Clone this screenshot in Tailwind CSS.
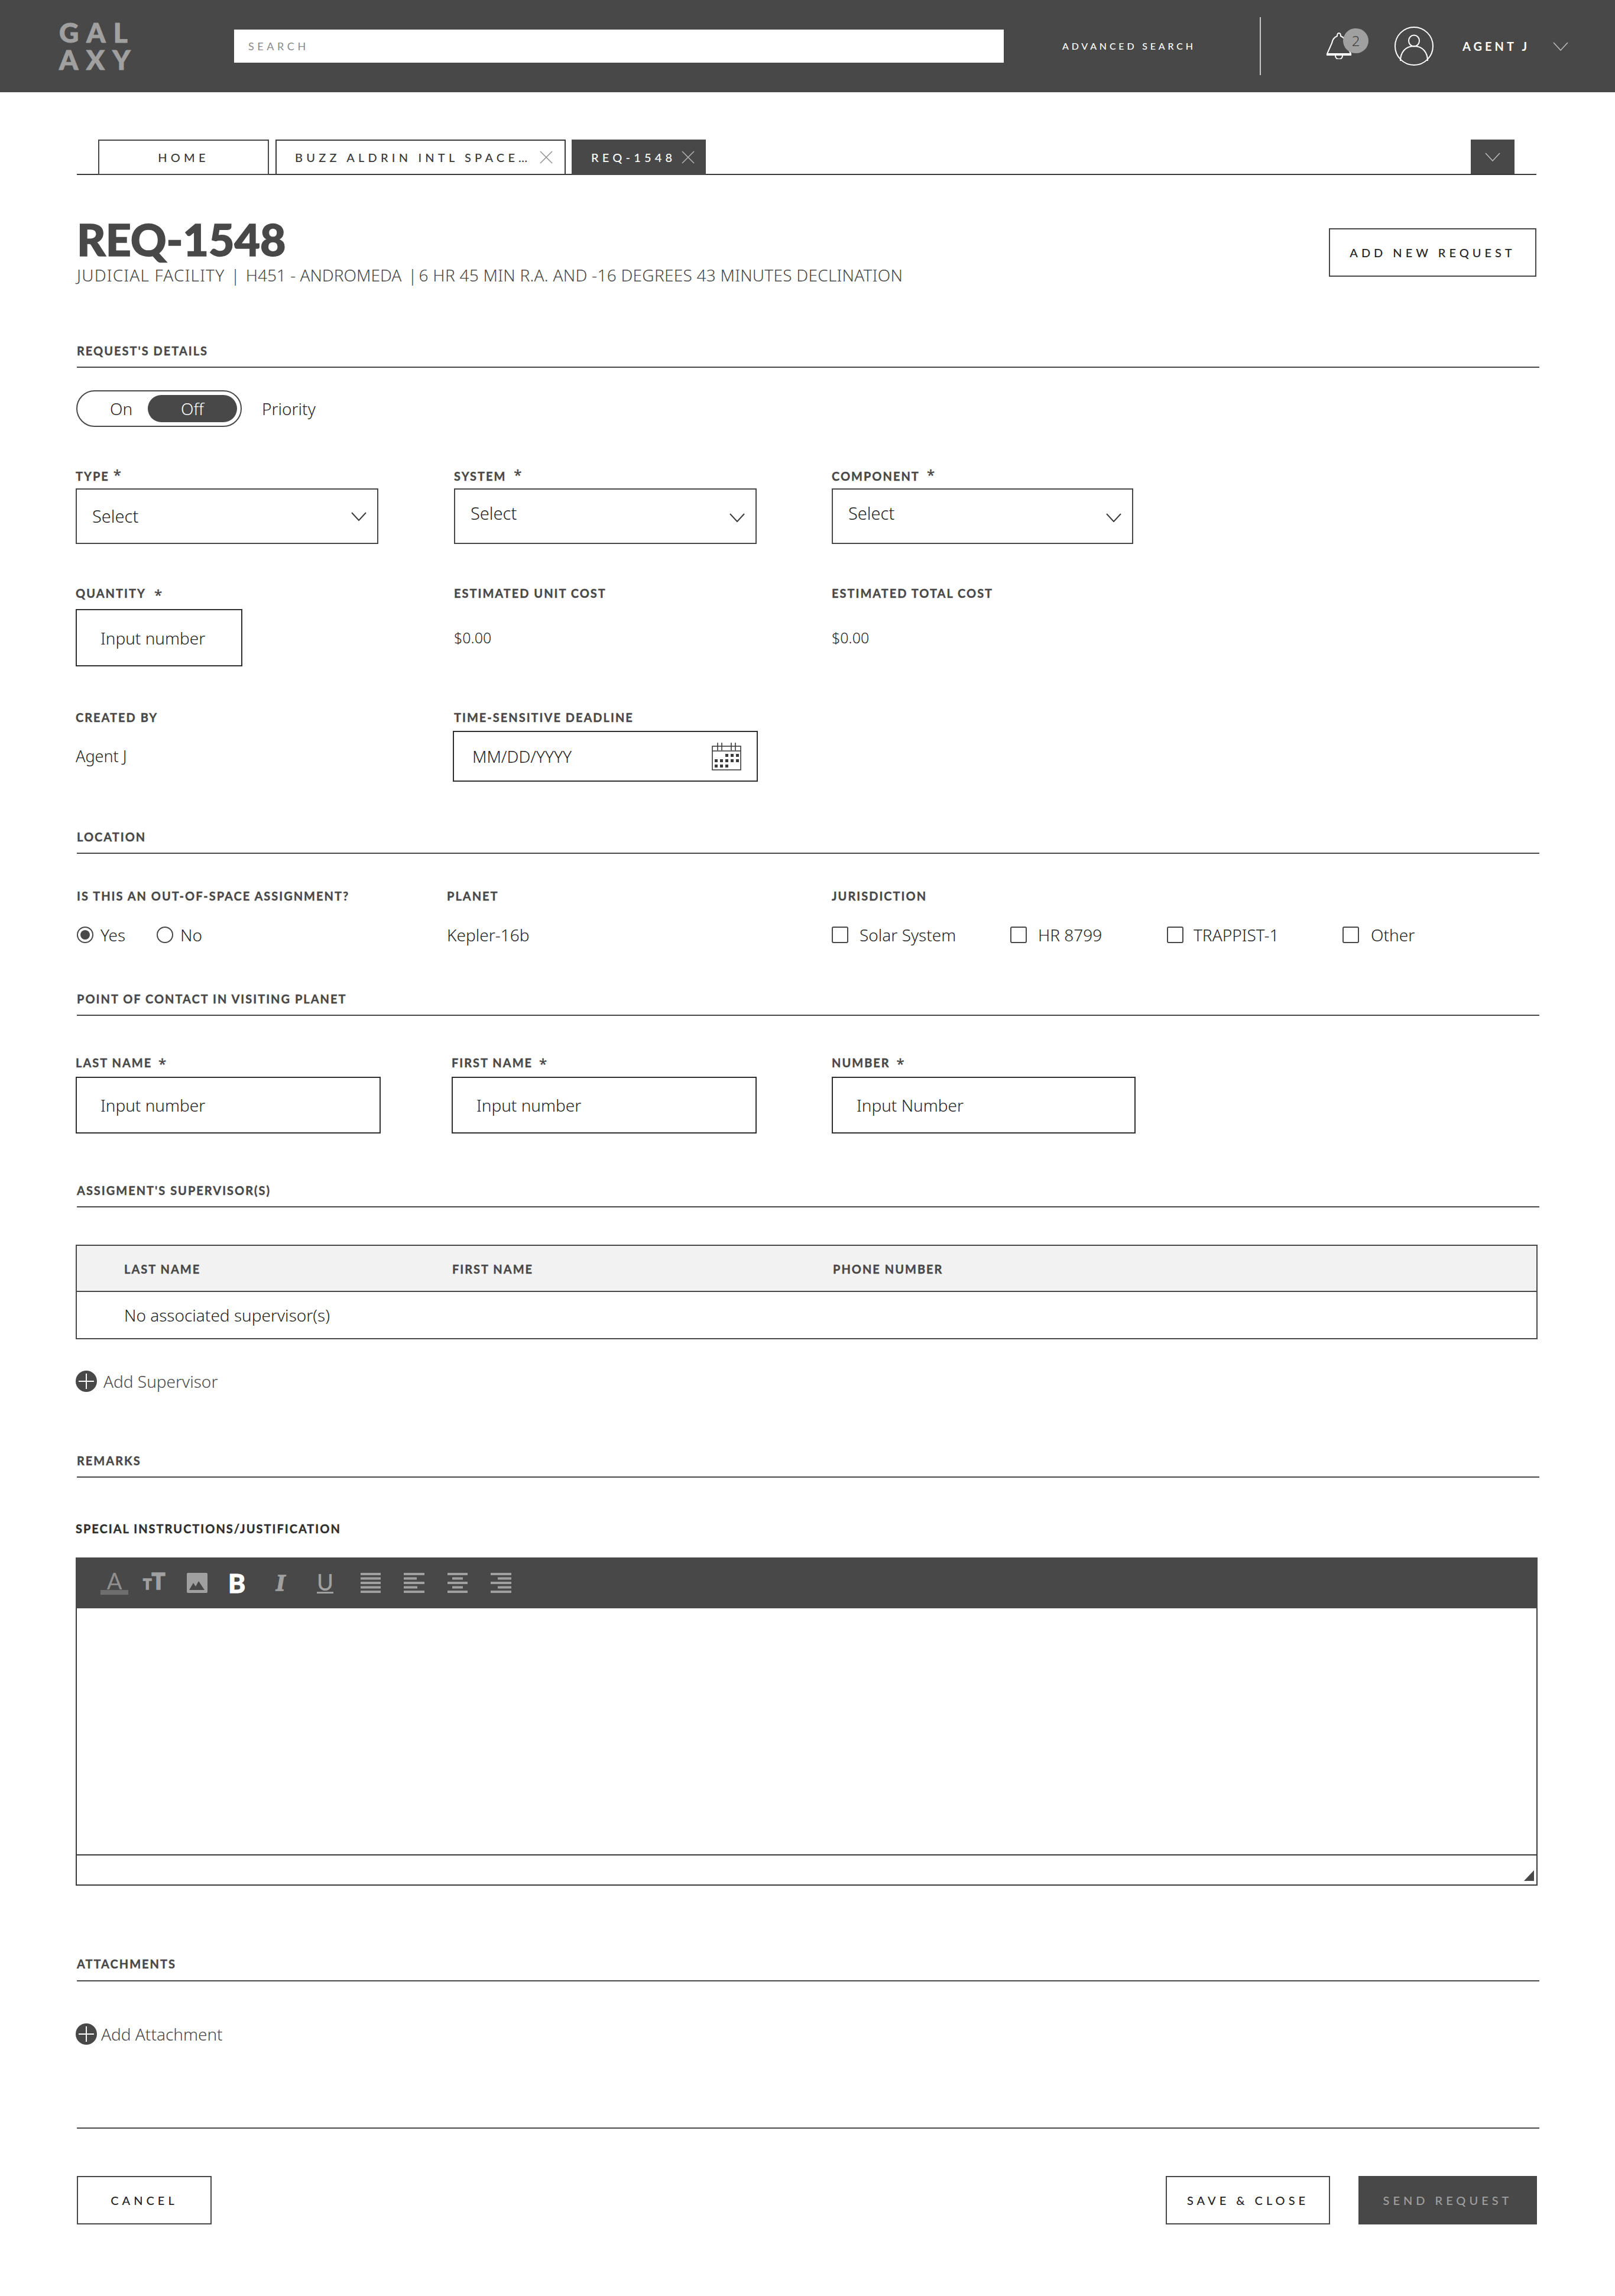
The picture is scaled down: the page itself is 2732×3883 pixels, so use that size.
<!DOCTYPE html>
<html lang="en">
<head>
    <meta charset="UTF-8">
    <meta name="viewport" content="width=device-width, initial-scale=1.0">
    <title>REQ-1548</title>
    <script src="https://cdn.jsdelivr.net/npm/@tailwindcss/browser@4"></script>
</head>
<body class="bg-white font-['Noto_Sans',sans-serif] text-[#242424] min-h-[3883px]">
    <!-- top bar -->
    <header class="h-[156px] bg-[#484848] flex items-center">
        <div class="w-[396px] pl-[100px] font-['Lato',sans-serif] font-black text-[46px] leading-[46px] tracking-[0.29em] text-[#a0a0a0] [-webkit-text-stroke:1px]">
            <div>GAL</div>
            <div>AXY</div>
        </div>
        <div class="w-[1302px] h-[56px] bg-white flex items-center pl-[24px] font-['Lato',sans-serif] text-[18px] tracking-[0.31em] text-[#8a8a8a]">SEARCH</div>
        <div class="ml-[99px] w-[334px] font-['Lato',sans-serif] font-medium text-[16px] tracking-[0.3em] text-white">ADVANCED SEARCH</div>
        <div class="w-[2px] h-[98px] bg-[#c8c8c8]"></div>
        <div class="ml-[110px] relative w-[72px] h-[60px] shrink-0">
            <svg class="absolute left-0 top-[7px]" width="44" height="45" viewBox="0 0 44 45" fill="none" stroke="#fff" stroke-width="2">
                <path d="M22 1c-2 0-3 2-3 5-5 2-8 6-9 12L2 36h40l-8-18c-1-6-4-10-9-12 0-3-1-5-3-5z"/>
                <path d="M1 38h42"/>
                <path d="M16 39c0 8 12 8 12 0"/>
            </svg>
            <div class="absolute left-[29px] top-0 w-[43px] h-[42px] rounded-full bg-[#a0a0a0] flex items-center justify-center text-[24px] text-[#3a3a3a] font-light">2</div>
        </div>
        <svg class="ml-[44px] shrink-0" width="66" height="66" viewBox="0 0 66 66" fill="none" stroke="#fff" stroke-width="2">
            <circle cx="33" cy="33" r="32"/>
            <ellipse cx="33" cy="24" rx="9" ry="9.5"/>
            <path d="M10 58c0-14 8-25 23-25s23 11 23 25"/>
        </svg>
        <div class="ml-[49px] w-[153px] font-['Lato',sans-serif] font-bold text-[20px] tracking-[0.25em] text-white">AGENT J</div>
        <svg width="26" height="15" viewBox="0 0 26 15" fill="none" stroke="#bdbdbd" stroke-width="1.5"><path d="M1 1l12 13L25 1"/></svg>
    </header>

    <main class="pl-[128px] pr-[128px]">
        <!-- tabs -->
        <nav class="mt-[80px] ml-[2px] mr-[5px] h-[60px] border-b-2 border-[#3a3a3a] flex pl-[36px] font-['Lato',sans-serif] font-medium text-[20px] tracking-[0.31em]">
            <div class="w-[289px] h-[60px] border-2 border-[#484848] flex items-center justify-center text-[#3a3a3a]">HOME</div>
            <div class="ml-[11px] w-[491px] h-[60px] border-2 border-[#3a3a3a] flex items-center pl-[31px] text-[#3a3a3a]">
                <span class="w-[414px] whitespace-nowrap">BUZZ ALDRIN INTL SPACE…</span>
                <svg width="22" height="22" viewBox="0 0 22 22" fill="none" stroke="#8f8f8f" stroke-width="1.5"><path d="M1 1l20 20M21 1L1 21"/></svg>
            </div>
            <div class="ml-[10px] w-[227px] h-[60px] bg-[#484848] flex items-center pl-[33px] text-white">
                <span class="w-[153px] whitespace-nowrap">REQ-1548</span>
                <svg width="22" height="22" viewBox="0 0 22 22" fill="none" stroke="#b5b5b5" stroke-width="1.5"><path d="M1 1l20 20M21 1L1 21"/></svg>
            </div>
            <div class="ml-auto mr-[37px] w-[74px] h-[58px] bg-[#484848] flex items-center justify-center">
                <svg width="26" height="15" viewBox="0 0 26 15" fill="none" stroke="#bdbdbd" stroke-width="1.5"><path d="M1 1l12 13L25 1"/></svg>
            </div>
        </nav>

        <!-- title -->
        <section class="pt-[64px] ml-[2px] mr-[5px] flex justify-between items-start">
            <div>
                <h1 class="font-['Lato',sans-serif] font-black text-[75px] leading-[88px] text-[#484848] [-webkit-text-stroke:1.5px]">REQ-1548</h1>
                <p class="text-[28px] leading-[34px] text-[#484848] font-light whitespace-nowrap"><span class="tracking-[1.2px]">JUDICIAL FACILITY</span><span class="mx-[10px]">|</span><span>H451 - ANDROMEDA</span><span class="ml-[11px] mr-[3px]">|</span><span class="tracking-[0.26px]">6 HR 45 MIN R.A. AND -16 DEGREES 43 MINUTES DECLINATION</span></p>
            </div>
            <button class="mt-[26px] w-[351px] h-[82px] border-2 border-[#484848] font-['Lato',sans-serif] font-medium text-[20px] tracking-[0.3em]">ADD NEW REQUEST</button>
        </section>

        <!-- request's details -->
        <h2 class="mt-[101px] ml-[2px] pb-[17px] border-b-2 border-[#484848] font-['Lato',sans-serif] font-bold text-[20px] leading-[20px] tracking-[0.1em] text-[#484848] [-webkit-text-stroke:0.4px]">REQUEST'S DETAILS</h2>

        <div class="mt-[38px] flex items-center">
            <div class="ml-[1px] w-[280px] h-[62px] rounded-full border-2 border-[#484848] flex items-center pl-[7px] pr-[5px] text-[28px] font-light">
                <span class="w-[112px] pl-[22px] text-center">On</span>
                <span class="w-[151px] h-[46px] rounded-full bg-[#484848] text-white flex items-center justify-center">Off</span>
            </div>
            <span class="ml-[34px] text-[28px] font-light">Priority</span>
        </div>

        <div class="mt-[73px] grid grid-cols-[640px_639px_1fr] text-[29px] font-light">
            <div>
                <label class="block h-[20px] mb-[11px] font-['Lato',sans-serif] font-bold text-[20px] leading-[20px] tracking-[0.1em] text-[#484848] [-webkit-text-stroke:0.4px]">TYPE <span class="font-['Noto_Sans',sans-serif] text-[24px] font-normal leading-[0] align-[1px]">*</span></label>
                <div class="w-[512px] h-[94px] border-2 border-[#484848] flex items-center justify-between pl-[26px] pr-[18px]">
                    <span>Select</span>
                    <svg width="26" height="15" viewBox="0 0 26 15" fill="none" stroke="#3a3a3a" stroke-width="2"><path d="M1 1l12 13L25 1"/></svg>
                </div>
            </div>
            <div>
                <label class="block h-[20px] mb-[11px] font-['Lato',sans-serif] font-bold text-[20px] leading-[20px] tracking-[0.1em] text-[#484848] [-webkit-text-stroke:0.4px]">SYSTEM <span class="ml-[6px] font-['Noto_Sans',sans-serif] text-[24px] font-normal leading-[0] align-[1px]">*</span></label>
                <div class="w-[512px] h-[94px] border-2 border-[#484848] flex justify-between pl-[26px] pr-[18px] pt-[18px]">
                    <span>Select</span>
                    <svg class="mt-[22px]" width="26" height="15" viewBox="0 0 26 15" fill="none" stroke="#3a3a3a" stroke-width="2"><path d="M1 1l12 13L25 1"/></svg>
                </div>
            </div>
            <div>
                <label class="block h-[20px] mb-[11px] font-['Lato',sans-serif] font-bold text-[20px] leading-[20px] tracking-[0.1em] text-[#484848] [-webkit-text-stroke:0.4px]">COMPONENT <span class="ml-[6px] font-['Noto_Sans',sans-serif] text-[24px] font-normal leading-[0] align-[1px]">*</span></label>
                <div class="w-[510px] h-[94px] border-2 border-[#484848] flex justify-between pl-[26px] pr-[18px] pt-[18px]">
                    <span>Select</span>
                    <svg class="mt-[22px]" width="26" height="15" viewBox="0 0 26 15" fill="none" stroke="#3a3a3a" stroke-width="2"><path d="M1 1l12 13L25 1"/></svg>
                </div>
            </div>
        </div>

        <div class="mt-[73px] grid grid-cols-[640px_639px_1fr]">
            <div>
                <label class="block h-[20px] mb-[17px] font-['Lato',sans-serif] font-bold text-[20px] leading-[20px] tracking-[0.1em] text-[#484848] [-webkit-text-stroke:0.4px]">QUANTITY <span class="ml-[8px] font-['Noto_Sans',sans-serif] text-[24px] font-normal leading-[0] align-[-4px]">*</span></label>
                <div class="w-[282px] h-[97px] border-2 border-[#2e2e2e] flex items-center pl-[40px] text-[28px] font-light">Input number</div>
            </div>
            <div>
                <label class="block h-[20px] mb-[17px] font-['Lato',sans-serif] font-bold text-[20px] leading-[20px] tracking-[0.1em] text-[#484848] [-webkit-text-stroke:0.4px]">ESTIMATED UNIT COST</label>
                <div class="h-[97px] flex items-center text-[25px] font-light">$0.00</div>
            </div>
            <div>
                <label class="block h-[20px] mb-[17px] font-['Lato',sans-serif] font-bold text-[20px] leading-[20px] tracking-[0.1em] text-[#484848] [-webkit-text-stroke:0.4px]">ESTIMATED TOTAL COST</label>
                <div class="h-[97px] flex items-center text-[25px] font-light">$0.00</div>
            </div>
        </div>

        <div class="mt-[76px] grid grid-cols-[640px_639px_1fr]">
            <div>
                <label class="block h-[20px] mb-[13px] font-['Lato',sans-serif] font-bold text-[20px] leading-[20px] tracking-[0.1em] text-[#484848] [-webkit-text-stroke:0.4px]">CREATED BY</label>
                <div class="h-[86px] flex items-center text-[27px] font-light">Agent J</div>
            </div>
            <div>
                <label class="block h-[20px] mb-[13px] font-['Lato',sans-serif] font-bold text-[20px] leading-[20px] tracking-[0.1em] text-[#484848] [-webkit-text-stroke:0.4px]">TIME-SENSITIVE DEADLINE</label>
                <div class="-ml-[2px] w-[516px] h-[86px] border-2 border-[#2e2e2e] flex items-center justify-between pl-[31px] pr-[26px] text-[28px] font-light">
                    <span>MM/DD/YYYY</span>
                    <svg width="50" height="48" viewBox="0 0 50 48" fill="none" stroke="#3a3a3a" stroke-width="1.6">
                        <rect x="1" y="7" width="48" height="40"/>
                        <path d="M1 15h48M10 1v13M17 1v13M33 1v13M40 1v13"/>
                        <g fill="#3a3a3a" stroke="none">
                            <rect x="23" y="20" width="5" height="5"/><rect x="32" y="20" width="5" height="5"/><rect x="41" y="20" width="5" height="5"/>
                            <rect x="5" y="29" width="5" height="5"/><rect x="14" y="29" width="5" height="5"/><rect x="23" y="29" width="5" height="5"/><rect x="32" y="29" width="5" height="5"/><rect x="41" y="29" width="5" height="5"/>
                            <rect x="5" y="38" width="5" height="5"/><rect x="14" y="38" width="5" height="5"/><rect x="23" y="38" width="5" height="5"/>
                        </g>
                    </svg>
                </div>
            </div>
        </div>

        <!-- location -->
        <h2 class="mt-[83px] ml-[2px] pb-[17px] border-b-2 border-[#484848] font-['Lato',sans-serif] font-bold text-[20px] leading-[20px] tracking-[0.1em] text-[#484848] [-webkit-text-stroke:0.4px]">LOCATION</h2>

        <div class="mt-[61px] ml-[2px] grid grid-cols-[626px_651px_1fr] font-['Lato',sans-serif] font-bold text-[20px] leading-[20px] tracking-[0.1em] text-[#484848] [-webkit-text-stroke:0.4px]">
            <div>IS THIS AN OUT-OF-SPACE ASSIGNMENT?</div>
            <div>PLANET</div>
            <div>JURISDICTION</div>
        </div>
        <div class="mt-[42px] ml-[2px] grid grid-cols-[626px_651px_1fr] text-[28px] leading-[26px] font-light h-[28px] items-center">
            <div class="flex items-center">
                <span class="w-[28px] h-[28px] rounded-full border-2 border-[#484848] flex items-center justify-center"><span class="w-[16px] h-[16px] rounded-full bg-[#484848]"></span></span>
                <span class="ml-[12px] w-[95px]">Yes</span>
                <span class="w-[28px] h-[28px] rounded-full border-2 border-[#484848]"></span>
                <span class="ml-[12px]">No</span>
            </div>
            <div>Kepler-16b</div>
            <div class="flex items-center">
                <span class="w-[28px] h-[28px] rounded-[3px] border-2 border-[#484848]"></span>
                <span class="ml-[19px] w-[255px]">Solar System</span>
                <span class="w-[28px] h-[28px] rounded-[3px] border-2 border-[#484848]"></span>
                <span class="ml-[19px] w-[218px]">HR 8799</span>
                <span class="w-[28px] h-[28px] rounded-[3px] border-2 border-[#484848]"></span>
                <span class="ml-[17px] w-[252px]">TRAPPIST-1</span>
                <span class="w-[28px] h-[28px] rounded-[3px] border-2 border-[#484848]"></span>
                <span class="ml-[20px]">Other</span>
            </div>
        </div>

        <!-- point of contact -->
        <h2 class="mt-[84px] ml-[2px] pb-[17px] border-b-2 border-[#484848] font-['Lato',sans-serif] font-bold text-[20px] leading-[20px] tracking-[0.1em] text-[#484848] [-webkit-text-stroke:0.4px]">POINT OF CONTACT IN VISITING PLANET</h2>

        <div class="mt-[69px] grid grid-cols-[636px_643px_1fr]">
            <div>
                <label class="block h-[20px] mb-[14px] font-['Lato',sans-serif] font-bold text-[20px] leading-[20px] tracking-[0.1em] text-[#484848] [-webkit-text-stroke:0.4px]">LAST NAME <span class="ml-[4px] font-['Noto_Sans',sans-serif] text-[24px] font-normal leading-[0] align-[-3px]">*</span></label>
                <div class="w-[516px] h-[96px] border-2 border-[#2e2e2e] flex items-center pl-[40px] text-[28px] font-light">Input number</div>
            </div>
            <div>
                <label class="block h-[20px] mb-[14px] font-['Lato',sans-serif] font-bold text-[20px] leading-[20px] tracking-[0.1em] text-[#484848] [-webkit-text-stroke:0.4px]">FIRST NAME <span class="ml-[4px] font-['Noto_Sans',sans-serif] text-[24px] font-normal leading-[0] align-[-3px]">*</span></label>
                <div class="w-[516px] h-[96px] border-2 border-[#2e2e2e] flex items-center pl-[40px] text-[28px] font-light">Input number</div>
            </div>
            <div>
                <label class="block h-[20px] mb-[14px] font-['Lato',sans-serif] font-bold text-[20px] leading-[20px] tracking-[0.1em] text-[#484848] [-webkit-text-stroke:0.4px]">NUMBER <span class="ml-[4px] font-['Noto_Sans',sans-serif] text-[24px] font-normal leading-[0] align-[-3px]">*</span></label>
                <div class="w-[514px] h-[96px] border-2 border-[#2e2e2e] flex items-center pl-[40px] text-[28px] font-light">Input Number</div>
            </div>
        </div>

        <!-- supervisors -->
        <h2 class="mt-[86px] ml-[2px] pb-[17px] border-b-2 border-[#484848] font-['Lato',sans-serif] font-bold text-[20px] leading-[20px] tracking-[0.1em] text-[#484848] [-webkit-text-stroke:0.4px]">ASSIGMENT'S SUPERVISOR(S)</h2>

        <div class="mt-[63px] w-[2473px] border-2 border-[#484848]">
            <div class="h-[78px] pt-[2px] bg-[#f2f2f2] border-b-2 border-[#484848] grid grid-cols-[555px_644px_1fr] items-center pl-[80px] font-['Lato',sans-serif] font-bold text-[20px] tracking-[0.1em] text-[#484848] [-webkit-text-stroke:0.4px]">
                <div>LAST NAME</div>
                <div>FIRST NAME</div>
                <div>PHONE NUMBER</div>
            </div>
            <div class="h-[78px] flex items-center pl-[80px] text-[28px] font-light">No associated supervisor(s)</div>
        </div>

        <div class="mt-[53px] h-[36px] flex items-center text-[28px] font-light text-[#484848]">
            <svg width="36" height="36" viewBox="0 0 36 36"><circle cx="18" cy="18" r="18" fill="#484848"/><path d="M18 5v26M5 18h26" stroke="#fff" stroke-width="2"/></svg>
            <span class="ml-[11px]">Add Supervisor</span>
        </div>

        <!-- remarks -->
        <h2 class="mt-[106px] ml-[2px] pb-[17px] border-b-2 border-[#484848] font-['Lato',sans-serif] font-bold text-[20px] leading-[20px] tracking-[0.1em] text-[#484848] [-webkit-text-stroke:0.4px]">REMARKS</h2>

        <div class="mt-[76px] h-[20px] font-['Lato',sans-serif] font-bold text-[20px] leading-[20px] tracking-[0.1em] text-[#2e2e2e] [-webkit-text-stroke:0.4px]">SPECIAL INSTRUCTIONS/JUSTIFICATION</div>

        <!-- editor -->
        <div class="mt-[39px] w-[2473px]">
            <div class="h-[86px] bg-[#484848] flex items-center pl-[42px] text-[#a0a0a0]">
                <div class="w-[47px] flex flex-col items-center text-[#8f8f8f]">
                    <span class="font-['Lato',sans-serif] text-[38px] leading-[32px]">A</span>
                    <span class="w-[47px] h-[8px] bg-[#6e6e6e]"></span>
                </div>
                <div class="ml-[25px] w-[38px] font-['Lato',sans-serif] font-black leading-[34px] whitespace-nowrap [-webkit-text-stroke:1.5px]"><span class="text-[24px]">T</span><span class="text-[38px]">T</span></div>
                <svg class="ml-[36px]" width="35" height="34" viewBox="0 0 35 34"><rect width="35" height="34" rx="2" fill="#a0a0a0"/><path d="M4 29l7-12 4 6 5-9 10 15z" fill="#484848"/></svg>
                <span class="ml-[35px] w-[29px] font-['Lato',sans-serif] font-black text-[44px] leading-[44px] text-white [-webkit-text-stroke:1px]">B</span>
                <span class="ml-[48px] w-[23px] font-['Liberation_Serif',serif] font-bold italic text-[40px] leading-[40px] text-center [-webkit-text-stroke:1.5px]">I</span>
                <span class="ml-[50px] w-[28px] flex flex-col items-center">
                    <span class="font-['Lato',sans-serif] font-medium text-[38px] leading-[30px]">U</span>
                    <span class="mt-[2px] w-[28px] h-[3px] bg-[#a0a0a0]"></span>
                </span>
                <svg class="ml-[46px]" width="34" height="34" viewBox="0 0 34 34" fill="#a0a0a0"><rect y="0" width="34" height="4"/><rect y="7.5" width="34" height="4"/><rect y="15" width="34" height="4"/><rect y="22.5" width="34" height="4"/><rect y="30" width="34" height="4"/></svg>
                <svg class="ml-[39px]" width="35" height="34" viewBox="0 0 35 34" fill="#a0a0a0"><rect y="0" width="35" height="4"/><rect y="7.5" width="22" height="4"/><rect y="15" width="35" height="4"/><rect y="22.5" width="23" height="4"/><rect y="30" width="35" height="4"/></svg>
                <svg class="ml-[39px]" width="34" height="34" viewBox="0 0 34 34" fill="#a0a0a0"><rect y="0" width="34" height="4"/><rect x="8" y="7.5" width="18" height="4"/><rect y="15" width="34" height="4"/><rect x="8" y="22.5" width="18" height="4"/><rect y="30" width="34" height="4"/></svg>
                <svg class="ml-[39px]" width="35" height="34" viewBox="0 0 35 34" fill="#a0a0a0"><rect y="0" width="35" height="4"/><rect x="12" y="7.5" width="23" height="4"/><rect y="15" width="35" height="4"/><rect x="12" y="22.5" width="23" height="4"/><rect y="30" width="35" height="4"/></svg>
            </div>
            <div class="h-[416px] border-x-2 border-[#3a3a3a]"></div>
            <div class="relative h-[53px] border-2 border-[#3a3a3a]">
                <svg class="absolute right-[4px] bottom-[6px]" width="17" height="18" viewBox="0 0 17 18"><path d="M17 0v18H0z" fill="#484848"/></svg>
            </div>
        </div>

        <!-- attachments -->
        <h2 class="mt-[122px] ml-[2px] pb-[18px] border-b-2 border-[#484848] font-['Lato',sans-serif] font-bold text-[20px] leading-[20px] tracking-[0.1em] text-[#484848] [-webkit-text-stroke:0.4px]">ATTACHMENTS</h2>

        <div class="mt-[71px] h-[36px] flex items-center text-[28px] font-light text-[#484848]">
            <svg width="36" height="36" viewBox="0 0 36 36"><circle cx="18" cy="18" r="18" fill="#484848"/><path d="M18 5v26M5 18h26" stroke="#fff" stroke-width="2"/></svg>
            <span class="ml-[7px]">Add Attachment</span>
        </div>

        <hr class="mt-[140px] ml-[2px] border-t-2 border-[#484848]">

        <!-- actions -->
        <div class="mt-[80px] ml-[2px] mr-[4px] flex items-center font-['Lato',sans-serif] font-medium text-[20px] tracking-[0.3em]">
            <button class="w-[228px] h-[82px] border-2 border-[#484848]">CANCEL</button>
            <button class="ml-auto w-[278px] h-[82px] border-2 border-[#484848]">SAVE &amp; CLOSE</button>
            <button class="ml-[48px] w-[302px] h-[82px] bg-[#484848] text-[#a0a0a0]">SEND REQUEST</button>
        </div>
    </main>
</body>
</html>
